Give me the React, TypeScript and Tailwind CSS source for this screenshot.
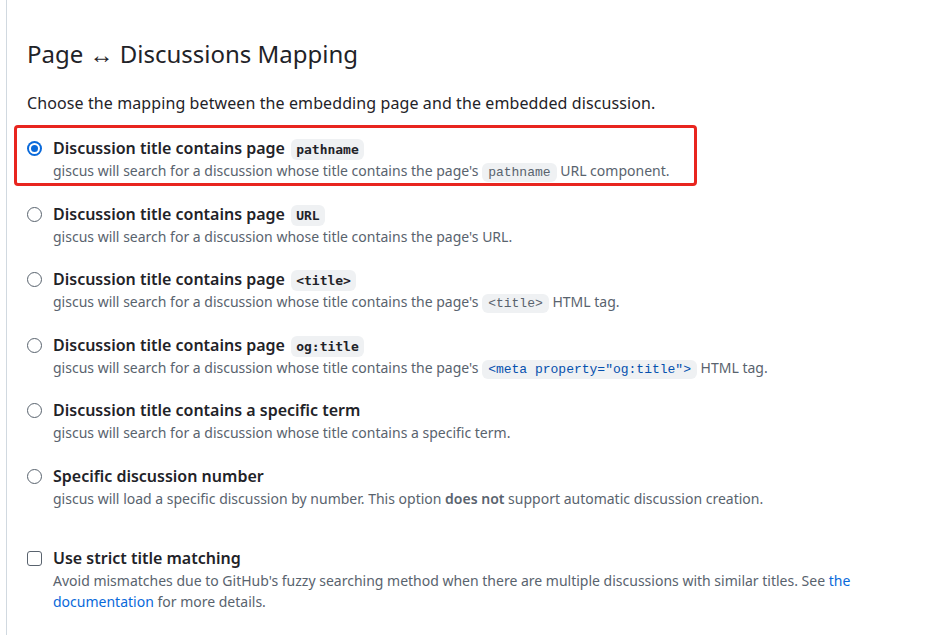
import type { ReactNode } from "react";

const FONT = { fontFamily: '"Noto Sans", "Open Sans", sans-serif' };

function Code({ children, blue }: { children: ReactNode; blue?: boolean }) {
  return (
    <code
      className={
        "rounded-md bg-[#eff1f3] px-[6px] py-[2px] font-['Liberation_Mono',monospace] text-[13px] leading-none " +
        (blue ? "text-[#0550ae]" : "text-[#59636e]")
      }
    >
      {children}
    </code>
  );
}

function LabelCode({ children }: { children: ReactNode }) {
  return (
    <code className="ml-[2px] rounded-md bg-[#eff1f3] px-[5px] py-[3px] font-['DejaVu_Sans_Mono',monospace] text-[13px] leading-none font-bold text-[#1f2328]">
      {children}
    </code>
  );
}

function Radio({ checked }: { checked?: boolean }) {
  return checked ? (
    <span className="mt-[5px] flex h-[15px] w-[15px] shrink-0 items-center justify-center rounded-full bg-[#0969da]">
      <span className="h-[11px] w-[11px] rounded-full bg-white p-[2px]">
        <span className="block h-full w-full rounded-full bg-[#0969da]" />
      </span>
    </span>
  ) : (
    <span className="mt-[5px] block h-[15px] w-[15px] shrink-0 rounded-full border border-[#59636e]" />
  );
}

const OPTIONS: { label: ReactNode; desc: ReactNode; checked?: boolean }[] = [
  {
    label: <>Discussion title contains page <LabelCode>pathname</LabelCode></>,
    desc: <>giscus will search for a discussion whose title contains the page's <Code>pathname</Code> URL component.</>,
    checked: true,
  },
  {
    label: <>Discussion title contains page <LabelCode>URL</LabelCode></>,
    desc: <>giscus will search for a discussion whose title contains the page's URL.</>,
  },
  {
    label: <>Discussion title contains page <LabelCode>&lt;title&gt;</LabelCode></>,
    desc: <>giscus will search for a discussion whose title contains the page's <Code>&lt;title&gt;</Code> HTML tag.</>,
  },
  {
    label: <>Discussion title contains page <LabelCode>og:title</LabelCode></>,
    desc: (
      <>
        giscus will search for a discussion whose title contains the page's{" "}
        <Code blue>&lt;meta property="og:title"&gt;</Code> HTML tag.
      </>
    ),
  },
  {
    label: <>Discussion title contains a specific term</>,
    desc: <>giscus will search for a discussion whose title contains a specific term.</>,
  },
  {
    label: <>Specific discussion number</>,
    desc: (
      <>
        giscus will load a specific discussion by number. This option <strong className="font-semibold">does not</strong> support
        automatic discussion creation.
      </>
    ),
  },
];

export default function App() {
  return (
    <div className="h-[635px] w-[931px] overflow-hidden bg-white text-[#1f2328]" style={FONT}>
      <div className="ml-[6px] h-full border-l border-[#d1d9e0] pl-[20px] pt-[39px]">
        <h2 className="text-[24px] leading-[30px] font-normal">Page ↔ Discussions Mapping</h2>
        <p className="mt-[22px] text-[16px] leading-6 tracking-[0.1px]">
          Choose the mapping between the embedding page and the embedded discussion.
        </p>

        <div className="mt-[21px] flex flex-col gap-[20.6px]">
          {OPTIONS.map((o, i) => (
            <div key={i} className="relative flex gap-[11px]">
              {o.checked && (
                <div className="pointer-events-none absolute -left-[13px] -top-[11px] h-[61px] w-[683px] rounded-[4px] border-[3px] border-[#e8251f]" />
              )}
              <Radio checked={o.checked} />
              <div>
                <div className="h-6 text-[16px] leading-6 font-semibold">{o.label}</div>
                <div className="h-[21px] text-[14px] leading-[21px] text-[#59636e]">{o.desc}</div>
              </div>
            </div>
          ))}
        </div>

        <div className="mt-[37px] flex gap-[11px]">
          <span className="mt-[5px] block h-[15px] w-[15px] shrink-0 rounded-[3px] border border-[#59636e]" />
          <div>
            <div className="text-[16px] leading-6 font-semibold">Use strict title matching</div>
            <div className="text-[14px] leading-[21px] text-[#59636e]">
              Avoid mismatches due to GitHub's fuzzy searching method when there are multiple discussions with similar titles. See{" "}
              <a className="text-[#0969da]">the</a> <a className="text-[#0969da]">documentation</a> for more details.
            </div>
          </div>
        </div>
      </div>
    </div>
  );
}
